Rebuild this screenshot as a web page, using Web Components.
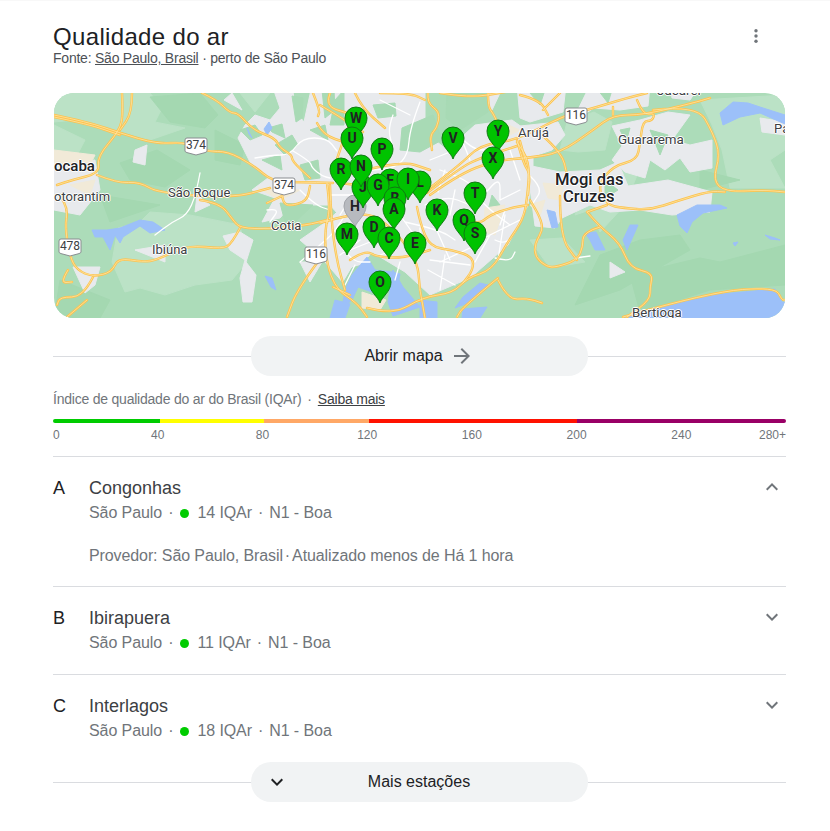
<!DOCTYPE html>
<html lang="pt-BR">
<head>
<meta charset="utf-8">
<title>Qualidade do ar</title>
<style>
  html, body { margin: 0; background: #fff; }
  body { font-family: "Liberation Sans", Arial, sans-serif; border-top: 1px solid #f8f8f8; }
</style>
</head>
<body>
<air-card>
  <air-header></air-header>
  <map-view>
    <map-label x="54" y="166" size="15" weight="500">ocaba</map-label>
    <map-label x="54" y="197" size="13">otorantim</map-label>
    <map-label x="168" y="193" size="13">São Roque</map-label>
    <map-label x="271" y="226" size="13">Cotia</map-label>
    <map-label x="152" y="250" size="13">Ibiúna</map-label>
    <map-label x="518" y="133" size="13.3">Arujá</map-label>
    <map-label x="618" y="140" size="13.4">Guararema</map-label>
    <map-label x="555" y="180" size="16.6" weight="500">Mogi das</map-label>
    <map-label x="563" y="197" size="16.6" weight="500">Cruzes</map-label>
    <map-label x="657" y="91" size="13.4">Jacareí</map-label>
    <map-label x="774" y="129" size="13">Pa</map-label>
    <map-label x="632" y="313" size="13.2">Bertioga</map-label>
    <map-shield x="196" y="146">374</map-shield>
    <map-shield x="284" y="186">374</map-shield>
    <map-shield x="576" y="116">116</map-shield>
    <map-shield x="70" y="247">478</map-shield>
    <map-shield x="316" y="255">116</map-shield>
    <map-pin x="355" y="206" gray>H</map-pin>
    <map-pin x="356" y="118">W</map-pin>
    <map-pin x="352" y="138">U</map-pin>
    <map-pin x="382" y="149">P</map-pin>
    <map-pin x="453" y="138">V</map-pin>
    <map-pin x="498" y="131">Y</map-pin>
    <map-pin x="493" y="158">X</map-pin>
    <map-pin x="475" y="193">T</map-pin>
    <map-pin x="464" y="220">Q</map-pin>
    <map-pin x="475" y="233">S</map-pin>
    <map-pin x="341" y="169">R</map-pin>
    <map-pin x="363" y="187">J</map-pin>
    <map-pin x="361" y="166">N</map-pin>
    <map-pin x="420" y="182">L</map-pin>
    <map-pin x="390" y="180">F</map-pin>
    <map-pin x="408" y="179">I</map-pin>
    <map-pin x="378" y="185">G</map-pin>
    <map-pin x="395" y="198">B</map-pin>
    <map-pin x="394" y="209">A</map-pin>
    <map-pin x="437" y="210">K</map-pin>
    <map-pin x="374" y="227">D</map-pin>
    <map-pin x="347" y="234">M</map-pin>
    <map-pin x="389" y="238">C</map-pin>
    <map-pin x="415" y="243">E</map-pin>
    <map-pin x="380" y="282">O</map-pin>
  </map-view>
  <pill-divider class="open">
    <span>Abrir mapa</span>
    <svg slot="after" width="24" height="24" viewBox="0 0 24 24"><path fill="#70757a" d="M12 4l-1.41 1.41L16.17 11H4v2h12.17l-5.58 5.59L12 20l8-8z"/></svg>
  </pill-divider>
  <aqi-scale></aqi-scale>
  <station-row letter="A" name="Congonhas" value="14" expanded>
    Provedor: São Paulo, Brasil<span style="margin:0 2px">·</span>Atualizado menos de Há 1 hora
  </station-row>
  <station-row letter="B" name="Ibirapuera" value="11"></station-row>
  <station-row letter="C" name="Interlagos" value="18" last></station-row>
  <pill-divider class="more">
    <svg slot="before" width="24" height="24" viewBox="0 0 24 24"><path fill="#202124" d="M16.59 8.59L12 13.17 7.41 8.59 6 10l6 6 6-6z"/></svg>
    <span>Mais estações</span>
  </pill-divider>
</air-card>

<script>
class AirCard extends HTMLElement {
  constructor() {
    super();
    this.attachShadow({ mode: 'open' });
    this.shadowRoot.innerHTML = `
      <style>
        :host {
          display: block;
          width: 733px;
          padding: 0 0 20px 53px;
          font-family: "Liberation Sans", Arial, sans-serif;
        }
      </style>
      <slot></slot>`;
  }
}

class AirHeader extends HTMLElement {
  constructor() {
    super();
    this.attachShadow({ mode: 'open' });
    this.shadowRoot.innerHTML = `
      <style>
        :host { display: flex; justify-content: space-between; height: 92px; }
        h2 { margin: 22px 0 0; font-size: 24px; line-height: 28px; font-weight: 400; color: #202124; letter-spacing: .34px; }
        p { margin: -1px 0 0; font-size: 14px; line-height: 17px; color: #4d5156; letter-spacing: -.23px; }
        a { color: #4d5156; text-decoration: underline; }
        svg { margin: 23px 18px 0 0; }
      </style>
      <div>
        <h2>Qualidade do ar</h2>
        <p>Fonte: <a>São Paulo, Brasil</a> · perto de São Paulo</p>
      </div>
      <svg width="24" height="24" viewBox="0 0 24 24" fill="#70757a">
        <circle cx="12" cy="6.7" r="1.7"/><circle cx="12" cy="12" r="1.7"/><circle cx="12" cy="17.3" r="1.7"/>
      </svg>`;
  }
}

// everything below is in page coordinates, the svg viewBox starts at the map corner
const GREEN_LIGHT = [
  '54,93 150,93 162,108 155,122 185,128 150,140 110,128 75,120 54,122',
  '54,125 85,140 72,165 54,170',
  '118,228 140,222 150,212 190,215 240,225 247,262 232,280 195,285 165,295 140,288 125,292 112,262',
  '700,100 785,95 785,150 770,160 785,188 730,188 722,150 712,125',
  '592,172 610,172 640,168 625,205 600,232 590,210 575,215',
  '530,240 562,238 585,262 550,268',
  '240,93 270,93 255,112',
  '567,122 594,112 612,122 605,150 578,152 560,150'
];
const GREEN_DARK = [
  '150,97 200,93 218,115 205,128 170,122',
  '120,163 157,150 190,170 165,187 130,180',
  '60,280 110,300 100,318 54,318',
  '630,275 650,270 700,258 720,262 785,245 785,285 710,290 640,312',
  '700,170 740,180 700,190',
  '600,255 640,240 680,235 690,250 620,290 575,305',
  '215,130 245,145 240,165 215,160',
  '100,195 160,205 110,222'
];
const URBAN = [
  '345,85 425,85 425,132 447,150 475,125 512,120 533,135 533,170 528,205 508,245 470,278 430,295 405,272 372,252 345,285 325,262 300,240 326,222 345,205',
  '272,85 292,85 296,112 304,122 312,85 345,85 345,222 330,205 313,205 293,203 280,218 262,222 275,198 252,190 268,178 250,162 238,138 245,125 255,115 270,120 280,108',
  '517,85 566,85 563,112 530,122 520,118',
  '520,126 558,122 565,135 552,150 528,158',
  '527,165 560,172 600,170 618,162 628,186 668,180 712,192 710,212 672,215 640,210 610,212 590,205 562,218 555,228 535,226',
  '590,85 650,85 648,106 620,110 594,108 572,122',
  '612,126 640,120 668,112 690,115 672,140 690,145 712,140 712,168 690,172 680,158 665,170 650,160 645,178 625,172 612,160 622,146',
  '670,85 700,85 690,100 672,98',
  '54,165 95,160 100,190 80,215 54,210',
  '73,267 100,267 95,285 85,293',
  '223,236 240,232 253,240 246,262 256,275 252,302 243,302 240,278 245,260 230,250',
  '135,250 165,245 165,262',
  '135,150 147,145 145,165 133,162',
  '197,195 210,205 195,212',
  '232,93 242,110 224,100',
  '760,118 785,122 785,135 762,132',
  '480,93 500,93 492,110',
  '300,262 322,262 310,282',
  '610,262 625,272 610,278'
];
const GREEN_OVER = [
  '373,105 395,103 396,116 378,118',
  '402,128 433,115 442,140 420,152 400,150',
  '447,88 487,88 488,112 460,130 446,118',
  '335,100 344,90 344,125 330,125',
  '292,96 303,98 302,118 296,122',
  '322,90 334,90 335,110 325,118',
  '268,128 282,124 285,138 272,132',
  '240,130 255,125 262,135 250,140',
  '275,145 292,135 298,145 285,155',
  '310,130 325,125 328,140',
  '598,90 612,90 608,103',
  '620,130 630,128 626,142',
  '650,130 668,135 660,155',
  '492,195 500,205 485,222',
  '262,160 280,155 282,170',
  '300,165 318,160 320,178 305,180',
  '280,203 313,205 295,222 285,222',
  '605,180 618,190 605,198',
  '530,93 545,90 540,105',
  '352,268 372,262 360,285 345,300 342,285'
];
const TAN = [
  '543,183 563,185 560,200 548,198',
  '485,208 505,205 495,235 484,232',
  '362,292 386,300 380,310 362,308',
  '95,155 54,150 54,165 90,165',
  '258,188 300,190 280,200',
  '530,205 545,200 540,216',
  '497,120 520,130 500,140',
  '70,185 95,180 90,195'
];
const WATER = [
  '367,257 375,270 392,272 400,274 398,284 382,286 372,292 358,287 352,300 342,308 345,290 352,275',
  '393,270 403,287 420,307 393,316 388,302',
  '463,297 480,283 488,285 470,302 455,308',
  '420,300 437,302 437,318 420,318',
  '463,309 487,307 480,318 462,318',
  '335,300 350,304 345,318 330,318',
  '623,318 710,295 775,289 782,302 785,302 785,318',
  '92,230 107,230 120,228 140,220 153,222 165,230 150,233 140,226 123,237 120,243 115,235 110,250 103,237 95,237',
  '264,129 269,122 272,128 267,135',
  '247,128 249,134 252,138',
  '265,276 272,278 276,290 271,287',
  '547,210 555,212 558,227 552,228',
  '585,233 596,232 605,250 595,250 590,240',
  '623,240 630,225 638,225 627,250',
  '677,215 697,205 720,205 727,208 703,213 692,222 687,233 680,226',
  '720,113 733,102 748,103 760,107 785,115 785,124 760,113 740,117 723,125',
  '765,235 775,238 780,240 770,239',
  '733,243 738,242 735,246'
];
const HIGHWAYS = [
  '54,115 88,122 120,133 157,144 185,142 208,152 227,151 253,165 273,182 300,182 333,183',
  '54,117 88,124 120,135',
  '122,93 123,113 120,130 97,157 100,173 72,180 57,185',
  '132,93 132,113 120,130',
  '97,175 117,183 140,182 158,193 233,198 270,188',
  '202,93 217,100 230,113 238,113 253,130 275,138 280,148 292,155 292,161 310,178',
  '200,200 220,203 233,220 240,228 270,229 307,225 327,220',
  '240,228 232,243 223,249 187,245 157,260 143,262 118,258 112,272 93,277 77,270 70,257 65,227 68,210 60,195',
  '93,277 83,297 60,297 57,305',
  '87,300 67,317',
  '68,270 60,283 72,282',
  '327,220 323,243 333,287 357,303 367,317',
  '327,183 330,206 327,223',
  '330,185 331,220 337,262 345,290',
  '282,195 283,203 290,206 307,201 310,186',
  '282,196 267,203',
  '317,263 297,290 287,317',
  '333,287 350,295',
  '367,308 393,315 423,297 453,293 467,278 492,270 507,243 523,220 527,200 530,163 517,142',
  '427,190 460,165 480,145 517,140 563,116 587,110 627,98 647,93',
  '427,193 460,168 480,158 517,146',
  '430,195 462,172 500,160 527,158 560,153 593,130 613,115 643,115 693,103 710,98',
  '613,107 613,115',
  '637,100 643,115 655,113 652,121 643,121 640,143 637,160 613,166 597,186 607,205 623,208 650,210 677,201 710,191 725,192',
  '653,110 697,105 713,133 720,155 713,180 725,192 763,190 785,192',
  '587,212 600,227 620,243 630,268 653,273 650,287 650,300 627,317',
  '607,205 587,212',
  '600,227 583,232 583,247 577,260 557,267 547,267 535,257 535,243 543,230 540,217 530,200',
  '560,196 560,237 577,260',
  '498,280 508,300 527,298 542,303',
  '498,278 463,307 457,317',
  '623,317 710,292 775,287 782,300 785,300',
  '517,140 523,163 530,173 528,195',
  '520,141 526,163',
  '543,136 562,153 567,175',
  '320,105 337,115 363,132',
  '317,123 323,135 347,143',
  '313,93 320,110 318,116',
  '330,93 325,106 347,113',
  '355,93 362,108 385,128',
  '428,93 427,103 440,112 437,128 430,135 432,150',
  '488,93 488,107 493,113 500,128',
  '320,223 340,217 367,213 387,223 417,258 420,290',
  '350,260 365,250 377,257 403,258 430,250',
  '417,207 420,223 430,247 453,250 473,257 473,270 463,283',
  '460,220 478,225 490,215 510,208 528,205',
  '380,93 410,93 425,100',
  '440,93 470,98 505,92',
  '543,110 560,93',
  '520,95 540,100 548,115',
  '340,183 415,192',
  '345,175 400,160 430,170',
  '420,290 425,318',
  '355,110 345,135 335,165'
];
const STREETS = [
  '420,102 410,128 408,155 395,168 372,170',
  '393,115 388,128 392,145',
  '255,158 272,155 290,155 302,138 327,138 337,151',
  '293,151 310,161 312,168 322,176 330,178',
  '267,210 280,208 270,222',
  '200,173 196,195 187,215 172,222 155,235',
  '300,190 315,205 330,210',
  '345,215 335,232 320,245 300,262',
  '350,250 375,240',
  '405,222 440,230 455,240',
  '425,205 445,195 470,205',
  '440,170 470,180 480,200 500,176 500,200',
  '480,200 490,210 510,225',
  '530,176 543,188 533,203',
  '500,200 520,190',
  '495,240 505,245 515,232',
  '445,255 440,290',
  '480,240 520,220',
  '430,260 470,265',
  '400,262 395,280',
  '355,265 345,285',
  '340,245 352,262 370,262',
  '330,195 360,195',
  '445,170 438,192',
  '400,215 412,232',
  '380,255 395,250',
  '495,258 510,262 515,252',
  '575,258 590,256',
  '340,150 345,130',
  '455,130 470,150 495,150',
  '500,225 505,210',
  '420,228 420,250',
  '430,215 450,260',
  '440,262 470,248',
  '455,190 450,215',
  '490,235 475,262',
  '505,215 498,260',
  '428,270 455,285',
  '340,255 360,240',
  '430,160 455,150',
  '510,150 520,180',
  '470,160 462,140',
  '355,190 340,215',
  '410,115 380,100'
];

const mid = (a, b) => `${(a[0] + b[0]) / 2} ${(a[1] + b[1]) / 2}`;
const pts = s => s.split(' ').map(p => p.split(',').map(Number));
const open = s => {
  const p = pts(s);
  let d = `M${p[0][0]} ${p[0][1]}`;
  for (let i = 1; i < p.length - 1; i++) d += `Q${p[i][0]} ${p[i][1]} ${mid(p[i], p[i + 1])}`;
  const e = p[p.length - 1];
  return d + `L${e[0]} ${e[1]}`;
};
const area = (list, fill) => list.map(s => `<polygon points="${s}" fill="${fill}" stroke="${fill}" stroke-linejoin="round"/>`).join('');
const road = (list, color, w) => `<path fill="none" stroke="${color}" stroke-width="${w}" stroke-linecap="round" d="${list.map(open).join('')}"/>`;

class MapView extends HTMLElement {
  constructor() {
    super();
    this.attachShadow({ mode: 'open' });
    this.shadowRoot.innerHTML = `
      <style>
        :host {
          display: block;
          position: relative;
          width: 731px;
          height: 225px;
          margin-left: 1px;
          border-radius: 20px;
          overflow: hidden;
          background: #acdcb9;
        }
        svg { display: block; }
      </style>
      <svg width="731" height="225" viewBox="54 93 731 225">
        ${area(GREEN_LIGHT, '#bbe2c6')}
        ${area(GREEN_DARK, '#a4d8b1')}
        ${area(URBAN, '#e8eaed')}
        ${area(GREEN_OVER, '#a8dab5')}
        ${area(TAN, '#f1ead8')}
        ${area(WATER, '#9cc0f9')}
        ${road(STREETS, '#ffffff', 1.3)}
        ${road(HIGHWAYS, '#fcc34f', 2.4)}
        ${road(HIGHWAYS, '#fde9b0', 0.7)}
      </svg>
      <slot></slot>`;
  }
}

class MapPin extends HTMLElement {
  constructor() {
    super();
    this.attachShadow({ mode: 'open' });
    this.shadowRoot.innerHTML = `
      <style>
        :host {
          position: absolute;
          width: 24px;
          height: 34px;
          font: 700 14px Roboto, sans-serif;
          color: #202124;
        }
        svg { position: absolute; left: 0; top: 0; }
        span {
          position: absolute;
          left: 0; right: 0; top: 4px;
          line-height: 16px;
          text-align: center;
        }
      </style>
      <svg width="24" height="34" viewBox="-12 -12 24 34">
        <path d="M0 21C-2 14.5-11 9.5-11 0A11 11 0 0 1 11 0C11 9.5 2 14.5 0 21Z"/>
      </svg>
      <span><slot></slot></span>`;
  }
  connectedCallback() {
    // x,y is the centre of the head, in page coordinates
    this.style.left = (this.getAttribute('x') - 54 - 12) + 'px';
    this.style.top = (this.getAttribute('y') - 93 - 12) + 'px';
    const path = this.shadowRoot.querySelector('path');
    const gray = this.hasAttribute('gray');
    path.setAttribute('fill', gray ? '#b7babf' : '#00c300');
    path.setAttribute('stroke', gray ? '#a0a3a8' : '#0f7a12');
  }
}

class MapLabel extends HTMLElement {
  constructor() {
    super();
    this.attachShadow({ mode: 'open' });
    this.shadowRoot.innerHTML = `
      <style>
        :host {
          position: absolute;
          font-family: Roboto, sans-serif;
          color: #3c4043;
          white-space: nowrap;
          line-height: 16px;
          text-shadow: -1px 0 #fff, 1px 0 #fff, 0 -1px #fff, 0 1px #fff;
        }
      </style>
      <slot></slot>`;
  }
  connectedCallback() {
    const size = this.getAttribute('size');
    this.style.fontSize = size + 'px';
    this.style.fontWeight = this.getAttribute('weight') || 400;
    if (size > 14) this.style.color = '#202124';
    this.style.left = (this.getAttribute('x') - 54) + 'px';
    this.style.top = (this.getAttribute('y') - 93 - 8) + 'px';
  }
}

class MapShield extends HTMLElement {
  constructor() {
    super();
    this.attachShadow({ mode: 'open' });
    this.shadowRoot.innerHTML = `
      <style>
        :host {
          position: absolute;
          width: 24px;
          height: 19px;
          font: 12px/15px Roboto, sans-serif;
          color: #3c4043;
        }
        svg { position: absolute; left: 0; top: 0; }
        span { position: absolute; left: 0; right: 0; top: 1px; text-align: center; }
      </style>
      <svg width="24" height="19" viewBox="0 0 24 19">
        <path d="M3 1H21Q23 1 23 3V14Q23 15 21 15.6L12 18 3 15.6Q1 15 1 14V3Q1 1 3 1Z" fill="#fff" stroke="#8a8d91"/>
      </svg>
      <span><slot></slot></span>`;
  }
  connectedCallback() {
    this.style.left = (this.getAttribute('x') - 54 - 12) + 'px';
    this.style.top = (this.getAttribute('y') - 93 - 9) + 'px';
  }
}

class PillDivider extends HTMLElement {
  constructor() {
    super();
    this.attachShadow({ mode: 'open' });
    this.shadowRoot.innerHTML = `
      <style>
        :host {
          display: flex;
          align-items: center;
          height: 40px;
          font-size: 16px;
          color: #202124;
        }
        hr { flex: 1; margin: 0; border: 0; height: 1px; background: #dadce0; }
        .pill {
          position: relative;
          width: 337px;
          height: 40px;
          border-radius: 20px;
          background: #f1f3f4;
          display: flex;
          align-items: center;
          justify-content: center;
          gap: 7px;
        }
        .before { position: absolute; left: 14px; top: 8px; height: 24px; }
        ::slotted(svg) { display: block; }
      </style>
      <hr>
      <div class="pill">
        <span class="before"><slot name="before"></slot></span>
        <slot></slot>
        <slot name="after"></slot>
      </div>
      <hr>`;
  }
  connectedCallback() {
    this.style.marginTop = this.classList.contains('open') ? '18px' : '21px';
    this.shadowRoot.querySelector('.pill').style.marginLeft = '-1px';
  }
}

class AqiScale extends HTMLElement {
  constructor() {
    super();
    this.attachShadow({ mode: 'open' });
    const ticks = ['40', '80', '120', '160', '200', '240'];
    this.shadowRoot.innerHTML = `
      <style>
        :host { display: block; border-bottom: 1px solid #dadce0; height: 65px; }
        .caption { margin-top: 15px; font-size: 14px; line-height: 17px; color: #70757a; letter-spacing: -.22px; display: flex; }
        .caption span { margin: 0 6px 0 6px; }
        a { color: #3c4043; text-decoration: underline; margin-left: 0; }
        .bar { display: flex; height: 4px; margin-top: 11px; border-radius: 2px; overflow: hidden; }
        .ticks { display: flex; margin-top: 5px; font-size: 12px; line-height: 15px; color: #70757a; }
        .ticks div { flex: 1; width: 0; white-space: nowrap; }
        .ticks div span { display: inline-block; transform: translateX(-50%); }
        .ticks div:first-child span { transform: none; }
        .ticks div:last-child { flex: 0; }
        .ticks div:last-child span { transform: translateX(-100%); }
      </style>
      <div class="caption">Índice de qualidade do ar do Brasil (IQAr)<span>·</span><a>Saiba mais</a></div>
      <div class="bar">
        <i style="width:107px;background:#00cc00"></i>
        <i style="width:104px;background:#ffff00"></i>
        <i style="width:105px;background:#ffa866"></i>
        <i style="width:208px;background:#ff1100"></i>
        <i style="width:209px;background:#990066"></i>
      </div>
      <div class="ticks">
        <div><span>0</span></div>
        ${ticks.map(t => `<div><span>${t}</span></div>`).join('')}
        <div><span>280+</span></div>
      </div>`;
  }
}

class StationRow extends HTMLElement {
  constructor() {
    super();
    this.attachShadow({ mode: 'open' });
  }
  connectedCallback() {
    const open = this.hasAttribute('expanded');
    const last = this.hasAttribute('last');
    const chevron = open
      ? 'M12 8l-6 6 1.41 1.41L12 10.83l4.59 4.58L18 14z'
      : 'M16.59 8.59L12 13.17 7.41 8.59 6 10l6 6 6-6z';
    this.shadowRoot.innerHTML = `
      <style>
        :host {
          display: grid;
          grid-template-columns: 36px 1fr 24px;
          padding: 20px 2px 0 0;
          height: ${last ? 46 : open ? 109 : 67}px;
          border-bottom: ${last ? 0 : 1}px solid #dadce0;
        }
        .letter { font-size: 18px; line-height: 23px; color: #202124; }
        .name { font-size: 18px; line-height: 23px; color: #3c4043; }
        .sub { margin-top: 2px; font-size: 16px; line-height: 22px; color: #70757a; display: flex; align-items: center; white-space: pre; letter-spacing: -.08px; }
        .sep { margin: 0 6px; }
        .dot { width: 9px; height: 9px; border-radius: 50%; background: #00cc00; margin: 0 8px 0 1px; }
        .more { margin-top: 21px; font-size: 16px; line-height: 22px; color: #70757a; letter-spacing: -.1px; }
        svg { display: block; margin-top: -2px; }
      </style>
      <div class="letter">${this.getAttribute('letter')}</div>
      <div>
        <div class="name">${this.getAttribute('name')}</div>
        <div class="sub">São Paulo<span class="sep">·</span><span class="dot"></span>${this.getAttribute('value')} IQAr<span class="sep">·</span>N1 - Boa</div>
        ${open ? '<div class="more"><slot></slot></div>' : ''}
      </div>
      <svg width="24" height="24" viewBox="0 0 24 24"><path fill="#70757a" d="${chevron}"/></svg>`;
  }
}

customElements.define('air-card', AirCard);
customElements.define('air-header', AirHeader);
customElements.define('map-view', MapView);
customElements.define('map-pin', MapPin);
customElements.define('map-label', MapLabel);
customElements.define('map-shield', MapShield);
customElements.define('pill-divider', PillDivider);
customElements.define('aqi-scale', AqiScale);
customElements.define('station-row', StationRow);
</script>
</body>
</html>
